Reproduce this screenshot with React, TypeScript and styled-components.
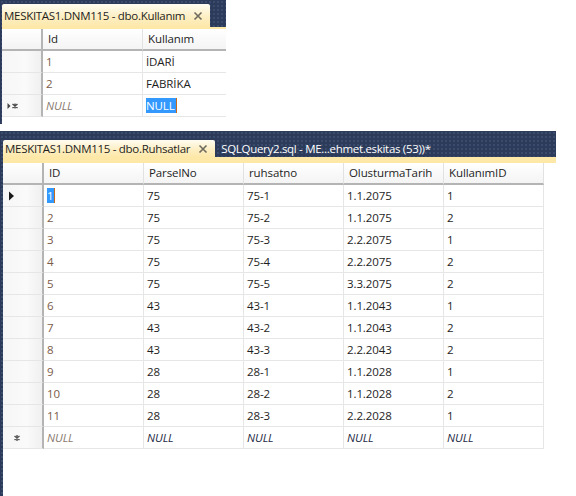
import React from 'react'
import styled, { createGlobalStyle } from 'styled-components'

const GlobalStyle = createGlobalStyle`
  html, body {
    margin: 0;
    padding: 0;
    background: #ffffff;
  }
  body {
    font-family: 'Segoe UI', 'Open Sans', 'Noto Sans', sans-serif;
    font-size: 11px;
    letter-spacing: -0.1px;
    color: #1e1e1e;
  }
`

type Column = { title: string; width: number }
type CellValue = { text: string; kind?: 'id' | 'null' | 'idNull' | 'selected' }
type Marker = 'current' | 'newEdit' | 'new' | undefined

const kullanimColumns: Column[] = [
  { title: 'Id', width: 100 },
  { title: 'Kullanım', width: 100 },
]

const kullanimRows: { marker?: Marker; cells: CellValue[] }[] = [
  { cells: [{ text: '1', kind: 'id' }, { text: 'İDARİ' }] },
  { cells: [{ text: '2', kind: 'id' }, { text: 'FABRİKA' }] },
  { marker: 'newEdit', cells: [{ text: 'NULL', kind: 'idNull' }, { text: 'NULL', kind: 'selected' }] },
]

const ruhsatColumns: Column[] = [
  { title: 'ID', width: 100 },
  { title: 'ParselNo', width: 100 },
  { title: 'ruhsatno', width: 100 },
  { title: 'OlusturmaTarih', width: 100 },
  { title: 'KullanımID', width: 100 },
]

const ruhsatData: [string, string, string, string, string][] = [
  ['1', '75', '75-1', '1.1.2075', '1'],
  ['2', '75', '75-2', '1.1.2075', '2'],
  ['3', '75', '75-3', '2.2.2075', '1'],
  ['4', '75', '75-4', '2.2.2075', '2'],
  ['5', '75', '75-5', '3.3.2075', '2'],
  ['6', '43', '43-1', '1.1.2043', '1'],
  ['7', '43', '43-2', '1.1.2043', '2'],
  ['8', '43', '43-3', '2.2.2043', '2'],
  ['9', '28', '28-1', '1.1.2028', '1'],
  ['10', '28', '28-2', '1.1.2028', '2'],
  ['11', '28', '28-3', '2.2.2028', '1'],
]

const ruhsatRows: { marker?: Marker; cells: CellValue[] }[] = [
  ...ruhsatData.map((r, i) => ({
    marker: (i === 0 ? 'current' : undefined) as Marker,
    cells: r.map((t, c) => ({
      text: t,
      kind: c === 0 ? (i === 0 ? 'selected' : 'id') : undefined,
    })) as CellValue[],
  })),
  {
    marker: 'new',
    cells: [
      { text: 'NULL', kind: 'idNull' },
      { text: 'NULL', kind: 'null' },
      { text: 'NULL', kind: 'null' },
      { text: 'NULL', kind: 'null' },
      { text: 'NULL', kind: 'null' },
    ],
  },
]

const CloseIcon = () => (
  <svg width="10" height="10" viewBox="0 0 10 10">
    <path d="M1.5 1.5 L8.5 8.5 M8.5 1.5 L1.5 8.5" stroke="#6e6a5e" strokeWidth="1.6" />
  </svg>
)

const RowMarker = ({ marker }: { marker: Marker }) => {
  if (marker === 'current') {
    return (
      <svg width="8" height="10" viewBox="0 0 8 10">
        <path d="M1 0.5 L6 5 L1 9.5 Z" fill="#1a1a1a" />
      </svg>
    )
  }
  if (marker === 'newEdit') {
    return (
      <svg width="12" height="8" viewBox="0 0 12 8">
        <path d="M0.5 1 L3.5 4 L0.5 7 Z" fill="#444" />
        <path d="M5.5 2 L10.5 6 M10.5 2 L5.5 6 M8 1.5 L8 6.5" stroke="#444" strokeWidth="1.3" />
      </svg>
    )
  }
  if (marker === 'new') {
    return (
      <svg width="8" height="8" viewBox="0 0 8 8">
        <path d="M1.5 2 L6.5 6 M6.5 2 L1.5 6 M4 1 L4 7" stroke="#555" strokeWidth="1.4" />
      </svg>
    )
  }
  return null
}

type DataGridProps = {
  columns: Column[]
  rows: { marker?: Marker; cells: CellValue[] }[]
}

const DataGrid: React.FC<DataGridProps> = ({ columns, rows }) => (
  <Grid $columns={columns.map(c => `${c.width}px`).join(' ')}>
    <CornerCell />
    {columns.map(c => (
      <HeaderCell key={c.title}>{c.title}</HeaderCell>
    ))}
    {rows.map((row, r) => (
      <React.Fragment key={r}>
        <RowHeader $markerOffset={row.marker === 'new' ? 10 : 5}>
          <RowMarker marker={row.marker} />
        </RowHeader>
        {row.cells.map((cell, c) => (
          <Cell key={c} $kind={cell.kind}>
            {cell.kind === 'selected' ? <Selection>{cell.text}</Selection> : cell.text}
          </Cell>
        ))}
      </React.Fragment>
    ))}
  </Grid>
)

type WindowProps = {
  width: number
  height: number
  edge: number
  topGap: number
  tabHeight: number
  stripHeight: number
  tabs: { title: string; active?: boolean; closable?: boolean }[]
  children: React.ReactNode
}

const DocumentWindow: React.FC<WindowProps> = ({
  width,
  height,
  edge,
  topGap,
  tabHeight,
  stripHeight,
  tabs,
  children,
}) => (
  <Window $width={width} $height={height} $edge={edge}>
    <TabStrip $topGap={topGap} $tabHeight={tabHeight}>
      {tabs.map(t => (
        <Tab key={t.title} $active={!!t.active}>
          {t.title}
          {t.closable && (
            <CloseButton>
              <CloseIcon />
            </CloseButton>
          )}
        </Tab>
      ))}
    </TabStrip>
    <TabUnderline $height={stripHeight} />
    <GridArea>{children}</GridArea>
  </Window>
)

const App = () => (
  <>
    <GlobalStyle />
    <Page>
      <DocumentWindow
        width={226}
        height={124}
        edge={2}
        topGap={4}
        tabHeight={23}
        stripHeight={2}
        tabs={[{ title: 'MESKITAS1.DNM115 - dbo.Kullanım', active: true, closable: true }]}
      >
        <DataGrid columns={kullanimColumns} rows={kullanimRows} />
      </DocumentWindow>
      <DocumentWindow
        width={556}
        height={365}
        edge={3}
        topGap={9}
        tabHeight={17}
        stripHeight={6}
        tabs={[
          { title: 'MESKITAS1.DNM115 - dbo.Ruhsatlar', active: true, closable: true },
          { title: 'SQLQuery2.sql - ME...ehmet.eskitas (53))*' },
        ]}
      >
        <DataGrid columns={ruhsatColumns} rows={ruhsatRows} />
      </DocumentWindow>
    </Page>
  </>
)

const Page = styled.div`
  display: flex;
  flex-direction: column;
  align-items: flex-start;
  gap: 7px;
  width: 576px;
  height: 496px;
  overflow: hidden;
`

const Window = styled.div<{ $width: number; $height: number; $edge: number }>`
  display: flex;
  flex-direction: column;
  flex-shrink: 0;
  box-sizing: border-box;
  width: ${p => p.$width}px;
  height: ${p => p.$height}px;
  padding-left: ${p => p.$edge}px;
  background-color: #2c3b5a;
  background-image: radial-gradient(#3a4b6e 0.8px, transparent 1px);
  background-size: 4px 4px;
`

const TabStrip = styled.div<{ $topGap: number; $tabHeight: number }>`
  display: flex;
  align-items: stretch;
  gap: 4px;
  padding-top: ${p => p.$topGap}px;
  height: ${p => p.$tabHeight}px;
`

const Tab = styled.div<{ $active: boolean }>`
  display: flex;
  align-items: center;
  gap: 8px;
  padding: 0 7px 0 2px;
  font-size: 11.5px;
  letter-spacing: -0.3px;
  white-space: nowrap;
  color: ${p => (p.$active ? '#1e1e1e' : '#ffffff')};
  background: ${p => (p.$active ? 'linear-gradient(#fffcf1, #fdeec0 60%, #fde8a9)' : 'transparent')};
  border-radius: 2px 2px 0 0;
`

const CloseButton = styled.span`
  display: flex;
  align-items: center;
`

const TabUnderline = styled.div<{ $height: number }>`
  height: ${p => p.$height}px;
  background: #fde8a8;
`

const GridArea = styled.div`
  flex: 1;
  background: #ffffff;
  overflow: hidden;
`

const Grid = styled.div<{ $columns: string }>`
  display: grid;
  grid-template-columns: 41px ${p => p.$columns};
  grid-auto-rows: 22px;
  width: max-content;
`

const CornerCell = styled.div`
  box-sizing: border-box;
  background: linear-gradient(#ffffff, #f3f3f3);
  border-right: 2px solid #b4b4b4;
  border-bottom: 2px solid #b4b4b4;
`

const HeaderCell = styled.div`
  box-sizing: border-box;
  padding-left: 5px;
  line-height: 20px;
  font-size: 11.5px;
  white-space: nowrap;
  overflow: hidden;
  color: #1e1e1e;
  background: linear-gradient(#ffffff, #f4f4f4);
  border-right: 1px solid #e2e2e2;
  border-bottom: 2px solid #b4b4b4;
`

const RowHeader = styled.div<{ $markerOffset: number }>`
  box-sizing: border-box;
  display: flex;
  align-items: center;
  padding-left: ${p => p.$markerOffset}px;
  background: linear-gradient(to right, #f6f6f6, #fafafa 60%, #f0f0f0);
  border-right: 2px solid #b4b4b4;
  border-bottom: 1px solid #e6e6e6;
`

const cellColors = {
  id: '#7b5b48',
  idNull: '#8a7a6e',
  null: '#1e2a44',
  selected: '#1e1e1e',
}

const Cell = styled.div<{ $kind?: 'id' | 'null' | 'idNull' | 'selected' }>`
  box-sizing: border-box;
  padding-left: 3px;
  line-height: 21px;
  font-size: 11.5px;
  white-space: nowrap;
  overflow: hidden;
  color: ${p => (p.$kind ? cellColors[p.$kind] : '#1e1e1e')};
  font-style: ${p => (p.$kind === 'null' || p.$kind === 'idNull' ? 'italic' : 'normal')};
  border-right: 1px solid #e6e6e6;
  border-bottom: 1px solid #e6e6e6;
`

const Selection = styled.span`
  display: inline-block;
  line-height: 15px;
  padding-right: 1px;
  color: #ffffff;
  background: #3399ff;
  border-right: 1px solid #c46a1a;
  font-style: inherit;
`

export default App
